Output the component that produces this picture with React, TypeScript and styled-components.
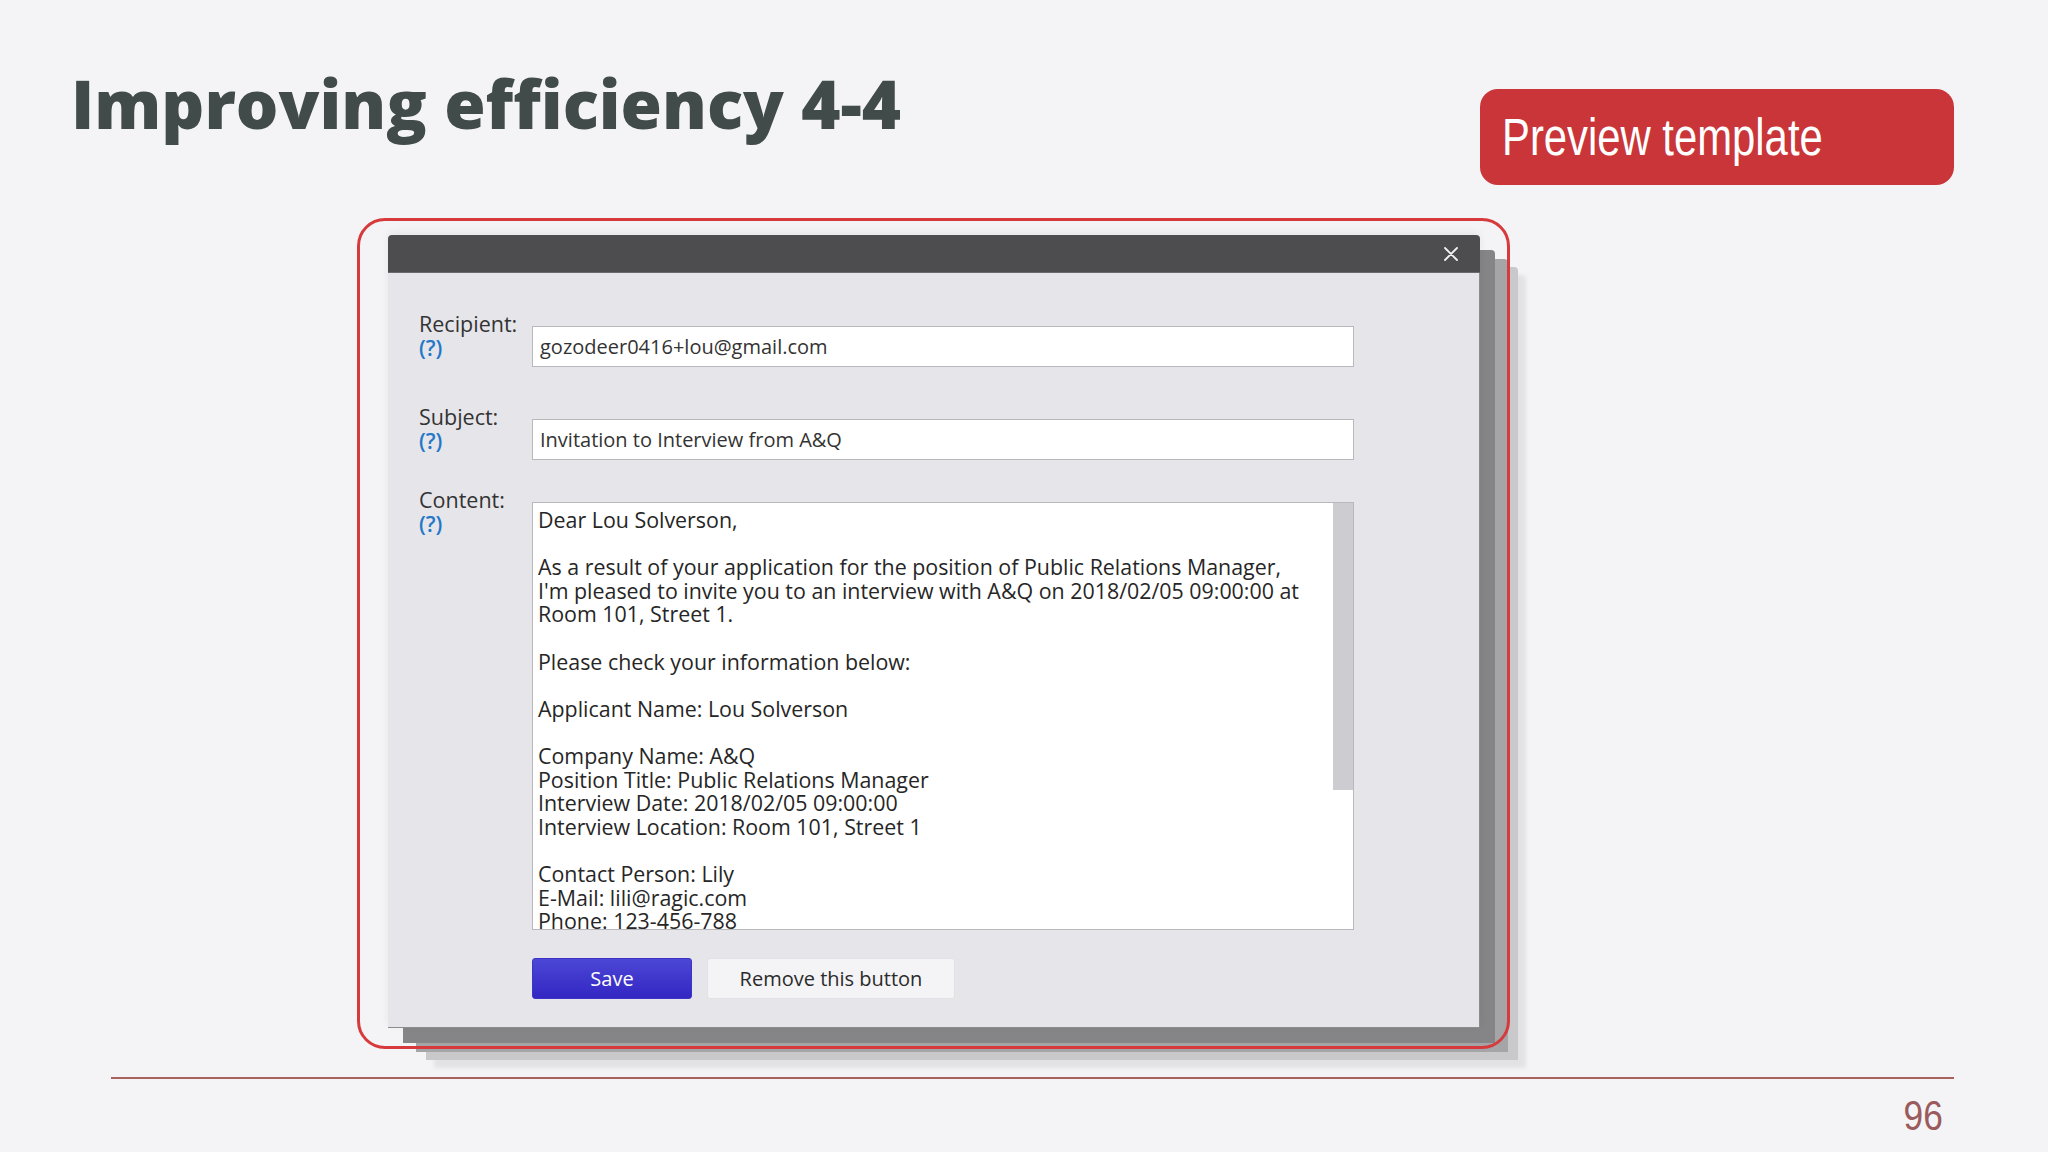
import React, { FC } from 'react';
import styled, { createGlobalStyle } from 'styled-components';

const GlobalStyle = createGlobalStyle`
  html, body {
    margin: 0;
    padding: 0;
    background: #f4f4f6;
  }
  * {
    box-sizing: border-box;
  }
`;

const letterLines = [
  'Dear Lou Solverson,',
  '',
  'As a result of your application for the position of Public Relations Manager,',
  "I'm pleased to invite you to an interview with A&Q on 2018/02/05 09:00:00 at",
  'Room 101, Street 1.',
  '',
  'Please check your information below:',
  '',
  'Applicant Name: Lou Solverson',
  '',
  'Company Name: A&Q',
  'Position Title: Public Relations Manager',
  'Interview Date: 2018/02/05 09:00:00',
  'Interview Location: Room 101, Street 1',
  '',
  'Contact Person: Lily',
  'E-Mail: lili@ragic.com',
  'Phone: 123-456-788',
];

interface FieldProps {
  label: string;
  gap: number;
  children: React.ReactNode;
}

const Field: FC<FieldProps> = ({ label, gap, children }) => (
  <FieldRow $gap={gap}>
    <Label>
      <span>{label}</span>
      <Help>(?)</Help>
    </Label>
    {children}
  </FieldRow>
);

const CloseIcon = () => (
  <svg width="16" height="16" viewBox="0 0 16 16">
    <path d="M2 2 L14 14 M14 2 L2 14" stroke="#f2f2f2" strokeWidth="1.8" strokeLinecap="round" />
  </svg>
);

export default function App() {
  return (
    <>
      <GlobalStyle />
      <Page>
        <Header>
          <Title>Improving efficiency 4-4</Title>
          <PreviewButton>
            <Narrow $origin="left">Preview template</Narrow>
          </PreviewButton>
        </Header>

        <Highlight>
          <Dialog>
            <TitleBar>
              <CloseButton>
                <CloseIcon />
              </CloseButton>
            </TitleBar>
            <DialogBody>
              <Field label="Recipient:" gap={0}>
                <TextInput>gozodeer0416+lou@gmail.com</TextInput>
              </Field>
              <Field label="Subject:" gap={38}>
                <TextInput>Invitation to Interview from A&amp;Q</TextInput>
              </Field>
              <Field label="Content:" gap={28}>
                <TextArea>
                  <Letter>
                    {letterLines.map((line, i) => (
                      <LetterLine key={i}>{line || '\u00a0'}</LetterLine>
                    ))}
                  </Letter>
                  <ScrollTrack>
                    <ScrollThumb />
                  </ScrollTrack>
                </TextArea>
              </Field>
              <Actions>
                <SaveButton>Save</SaveButton>
                <PlainButton>Remove this button</PlainButton>
              </Actions>
            </DialogBody>
          </Dialog>
        </Highlight>

        <Footer>
          <Rule />
          <PageNumber>
            <Narrow $origin="right">96</Narrow>
          </PageNumber>
        </Footer>
      </Page>
    </>
  );
}

const Page = styled.div`
  width: 2048px;
  height: 1152px;
  background: #f4f4f6;
  display: flex;
  flex-direction: column;
  overflow: hidden;
`;

const Header = styled.div`
  display: flex;
  justify-content: space-between;
  align-items: flex-start;
  height: 185px;
  padding: 0 94px 0 71px;
`;

const Title = styled.h1`
  margin: 63px 0 0;
  font-family: 'Open Sans', Lato, sans-serif;
  font-weight: 800;
  font-size: 67px;
  line-height: 80px;
  color: #414b49;
`;

// the slide uses a narrow face that is not installed; squeeze the regular one
const Narrow = styled.span<{ $origin: 'left' | 'right' }>`
  display: inline-block;
  transform: scaleX(0.82);
  transform-origin: ${p => p.$origin} center;
  white-space: nowrap;
`;

const PreviewButton = styled.div`
  margin-top: 89px;
  width: 474px;
  height: 96px;
  border-radius: 18px;
  background: #c93538;
  color: #ffffff;
  display: flex;
  align-items: center;
  padding-left: 22px;
  font-family: 'Liberation Sans', sans-serif;
  font-size: 51px;
`;

const Highlight = styled.div`
  position: relative;
  margin: 33px 0 0 357px;
  width: 1153px;
  height: 831px;
  padding: 17px 0 0 31px;

  &::after {
    content: '';
    position: absolute;
    inset: 0;
    border: 3px solid #d63a3c;
    border-radius: 28px;
    pointer-events: none;
  }
`;

const Dialog = styled.div`
  width: 1092px;
  height: 793px;
  display: flex;
  flex-direction: column;
  background: #e6e5ea;
  border-radius: 4px 4px 0 0;
  box-shadow:
    0 -3px 8px rgba(0, 0, 0, 0.06),
    15px 15px 0 #858487,
    28px 24px 0 #a5a4a7,
    38px 32px 0 #c9c8cb,
    46px 40px 4px #e2e2e4;
`;

const TitleBar = styled.div`
  height: 38px;
  flex-shrink: 0;
  background: #4d4c4f;
  border-radius: 4px 4px 0 0;
  border-bottom: 1px solid #6a696c;
  display: flex;
  justify-content: flex-end;
  align-items: center;
  padding-right: 21px;
`;

const CloseButton = styled.div`
  width: 16px;
  height: 16px;
  display: flex;
`;

const DialogBody = styled.div`
  flex: 1;
  padding: 39px 0 0 31px;
  border-right: 1px solid #8c8b8e;
  border-bottom: 1px solid #8c8b8e;
  font-family: 'Open Sans', sans-serif;
  font-size: 20px;
  color: #2b2b2b;
`;

const FieldRow = styled.div<{ $gap: number }>`
  display: grid;
  grid-template-columns: 113px 822px;
  align-items: start;
  margin-top: ${p => p.$gap}px;
`;

const Label = styled.div`
  display: flex;
  flex-direction: column;
  font-size: 21.5px;
  line-height: 23.5px;
  color: #333333;
`;

const Help = styled.span`
  color: #2478c8;
  font-weight: 600;
`;

const TextInput = styled.div`
  margin-top: 14px;
  height: 41px;
  background: #ffffff;
  border: 1px solid #b9b8bc;
  display: flex;
  align-items: center;
  padding: 0 7px;
  color: #333333;
  white-space: nowrap;
`;

const TextArea = styled.div`
  margin-top: 14px;
  height: 428px;
  background: #ffffff;
  border: 1px solid #b9b8bc;
  display: flex;
  overflow: hidden;
`;

const Letter = styled.div`
  flex: 1;
  padding: 5px 0 0 5px;
  font-size: 21.4px;
  color: #262626;
  overflow: hidden;
`;

const LetterLine = styled.div`
  line-height: 23.6px;
  height: 23.6px;
  white-space: pre;
`;

const ScrollTrack = styled.div`
  width: 20px;
  flex-shrink: 0;
`;

const ScrollThumb = styled.div`
  height: 287px;
  background: #cdccd0;
`;

const Actions = styled.div`
  display: flex;
  gap: 15px;
  margin: 28px 0 0 113px;
`;

const ButtonBase = styled.div`
  height: 41px;
  display: flex;
  align-items: center;
  justify-content: center;
  border-radius: 3px;
`;

const SaveButton = styled(ButtonBase)`
  width: 160px;
  background: linear-gradient(#4c47d6, #3326c2);
  border: 1px solid #3b34c4;
  color: #ffffff;
`;

const PlainButton = styled(ButtonBase)`
  width: 248px;
  background: #f4f4f6;
  border: 1px solid #e2e2e6;
  color: #2b2b2b;
`;

const Footer = styled.div`
  display: flex;
  flex-direction: column;
  margin-top: 28px;
`;

const Rule = styled.div`
  height: 2px;
  margin: 0 94px 0 111px;
  background: #a8615f;
`;

const PageNumber = styled.div`
  align-self: flex-end;
  margin: 12px 105px 0 0;
  font-family: 'Liberation Sans', sans-serif;
  font-size: 43px;
  line-height: 48px;
  color: #9a5a5e;
`;
